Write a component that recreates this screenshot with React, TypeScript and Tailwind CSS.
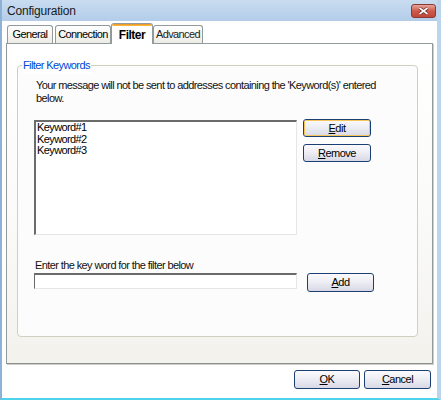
import type { ReactNode } from 'react'

const font = { fontFamily: '"Liberation Sans", Arial, sans-serif' }

function Mnemonic({ first, rest }: { first: string; rest: string }) {
  return (
    <span>
      <span className="underline underline-offset-[1px]">{first}</span>
      {rest}
    </span>
  )
}

function Button({
  children,
  className,
  focused,
}: {
  children: ReactNode
  className?: string
  focused?: boolean
}) {
  return (
    <div
      className={`flex items-center justify-center rounded-[3px] border border-[#1c3f73] bg-gradient-to-b from-[#fbfbfd] via-[#ececf3] to-[#d9d9e6] text-[11px] tracking-[-0.5px] text-black ${className ?? ''}`}>
      <div
        className={`flex h-full w-full items-center justify-center rounded-[2px] border ${
          focused ? 'border-[#f5c45a]' : 'border-transparent'
        }`}>
        {children}
      </div>
    </div>
  )
}

function Tab({ label, className }: { label: string; className?: string }) {
  return (
    <div
      className={`flex h-[18px] items-center justify-center rounded-t-[3px] border border-b-0 border-[#919b9c] bg-gradient-to-b from-white to-[#ecebe5] text-[11px] tracking-[-0.6px] ${className ?? ''}`}>
      {label}
    </div>
  )
}

export default function App() {
  return (
    <div
      className="relative flex h-[400px] w-[441px] flex-col overflow-hidden border-b-2 border-l-2 border-r-4 border-b-[#4fd2ec] border-l-[#8eb1d8] border-r-[#bcd4ec] bg-white text-black"
      style={font}>
      {/* title bar */}
      <div className="flex h-[21px] shrink-0 items-center justify-between bg-gradient-to-b from-[#c9dcf0] to-[#b3cde9] pl-[5px] pr-[1px]">
        <span className="text-[12px] tracking-[-0.2px] text-[#1a1a1a]">Configuration</span>
        <div className="flex h-[14px] w-[25px] items-center justify-center rounded-[3px] border border-[#8a3a30] bg-gradient-to-b from-[#e5a59c] via-[#cc5a4c] to-[#c4463a]">
          <svg width="11" height="8" viewBox="0 0 11 8">
            <path d="M1.5 1 L9.5 7 M9.5 1 L1.5 7" stroke="#5a2018" strokeWidth="3" />
            <path d="M1.5 1 L9.5 7 M9.5 1 L1.5 7" stroke="#ffffff" strokeWidth="1.6" />
          </svg>
        </div>
      </div>

      {/* tabs */}
      <div className="relative z-10 ml-[4px] mt-[2px] flex h-[20px] items-end">
        <Tab label="General" className="ml-[1px] w-[46px]" />
        <Tab label="Connection" className="ml-[2px] w-[56px]" />
        <div className="relative -mb-[1px] flex h-[21px] w-[42px] flex-col rounded-t-[3px] border border-b-0 border-[#919b9c] bg-white">
          <div className="h-[3px] rounded-t-[2px] bg-gradient-to-b from-[#e68b2c] to-[#ffc73c]" />
          <div className="flex flex-1 items-center justify-center text-[12px] font-bold tracking-[-0.5px]">
            Filter
          </div>
        </div>
        <Tab label="Advanced" className="w-[50px] text-[#222]" />
      </div>

      {/* tab panel */}
      <div className="ml-[4px] flex h-[321px] w-[427px] flex-col border border-[#919b9c] border-b-[#8b8f8e] bg-gradient-to-b from-white via-[#fbfbf9] to-[#f3f2ed] shadow-[1px_1px_0_#d0cfc6]">
        <div className="relative ml-[10px] mt-[21px] h-[272px] w-[401px] rounded-[4px] border border-[#d0d0bf] bg-[#fcfcfd]">
          <span className="absolute -top-[9px] left-[4px] bg-white px-[1px] text-[11px] tracking-[-0.6px] text-[#0046d5]">
            Filter Keywords
          </span>

          <p className="ml-[18px] mt-[13px] text-[11px] leading-[12.5px] tracking-[-0.6px] text-[#111]">
            Your message will not be sent to addresses containing the 'Keyword(s)' entered
            <br />
            below.
          </p>

          <div className="mt-[16px] flex">
            <div className="ml-[16px] h-[115px] w-[263px] border-l-2 border-t-2 border-b border-r border-l-[#6b6b6b] border-t-[#6b6b6b] border-b-[#e6e6e6] border-r-[#e6e6e6] bg-white pl-[1px] text-[11px] leading-[11.5px] tracking-[-0.6px]">
              <div>Keyword#1</div>
              <div>Keyword#2</div>
              <div>Keyword#3</div>
            </div>
            <div className="ml-[6px] flex flex-col gap-[7px] -mt-[1px]">
              <Button focused className="h-[18px] w-[68px]">
                <Mnemonic first="E" rest="dit" />
              </Button>
              <Button className="h-[18px] w-[68px]">
                <Mnemonic first="R" rest="emove" />
              </Button>
            </div>
          </div>

          <div className="ml-[17px] mt-[24px] text-[11px] leading-[13px] tracking-[-0.6px] text-[#111]">
            Enter the key word for the filter below
          </div>
          <div className="mt-[1px] flex">
            <div className="ml-[16px] h-[16px] w-[263px] border-l border-t-2 border-b border-r border-l-[#6b6b6b] border-t-[#6b6b6b] border-b-[#e6e6e6] border-r-[#e6e6e6] bg-white" />
            <Button className="ml-[10px] h-[19px] w-[67px]">
              <Mnemonic first="A" rest="dd" />
            </Button>
          </div>
        </div>
      </div>

      {/* footer */}
      <div className="mt-[6px] flex justify-end gap-[4px] pr-[6px]">
        <Button className="h-[19px] w-[66px]">
          <Mnemonic first="O" rest="K" />
        </Button>
        <Button className="h-[19px] w-[67px]">
          <Mnemonic first="C" rest="ancel" />
        </Button>
      </div>
    </div>
  )
}
